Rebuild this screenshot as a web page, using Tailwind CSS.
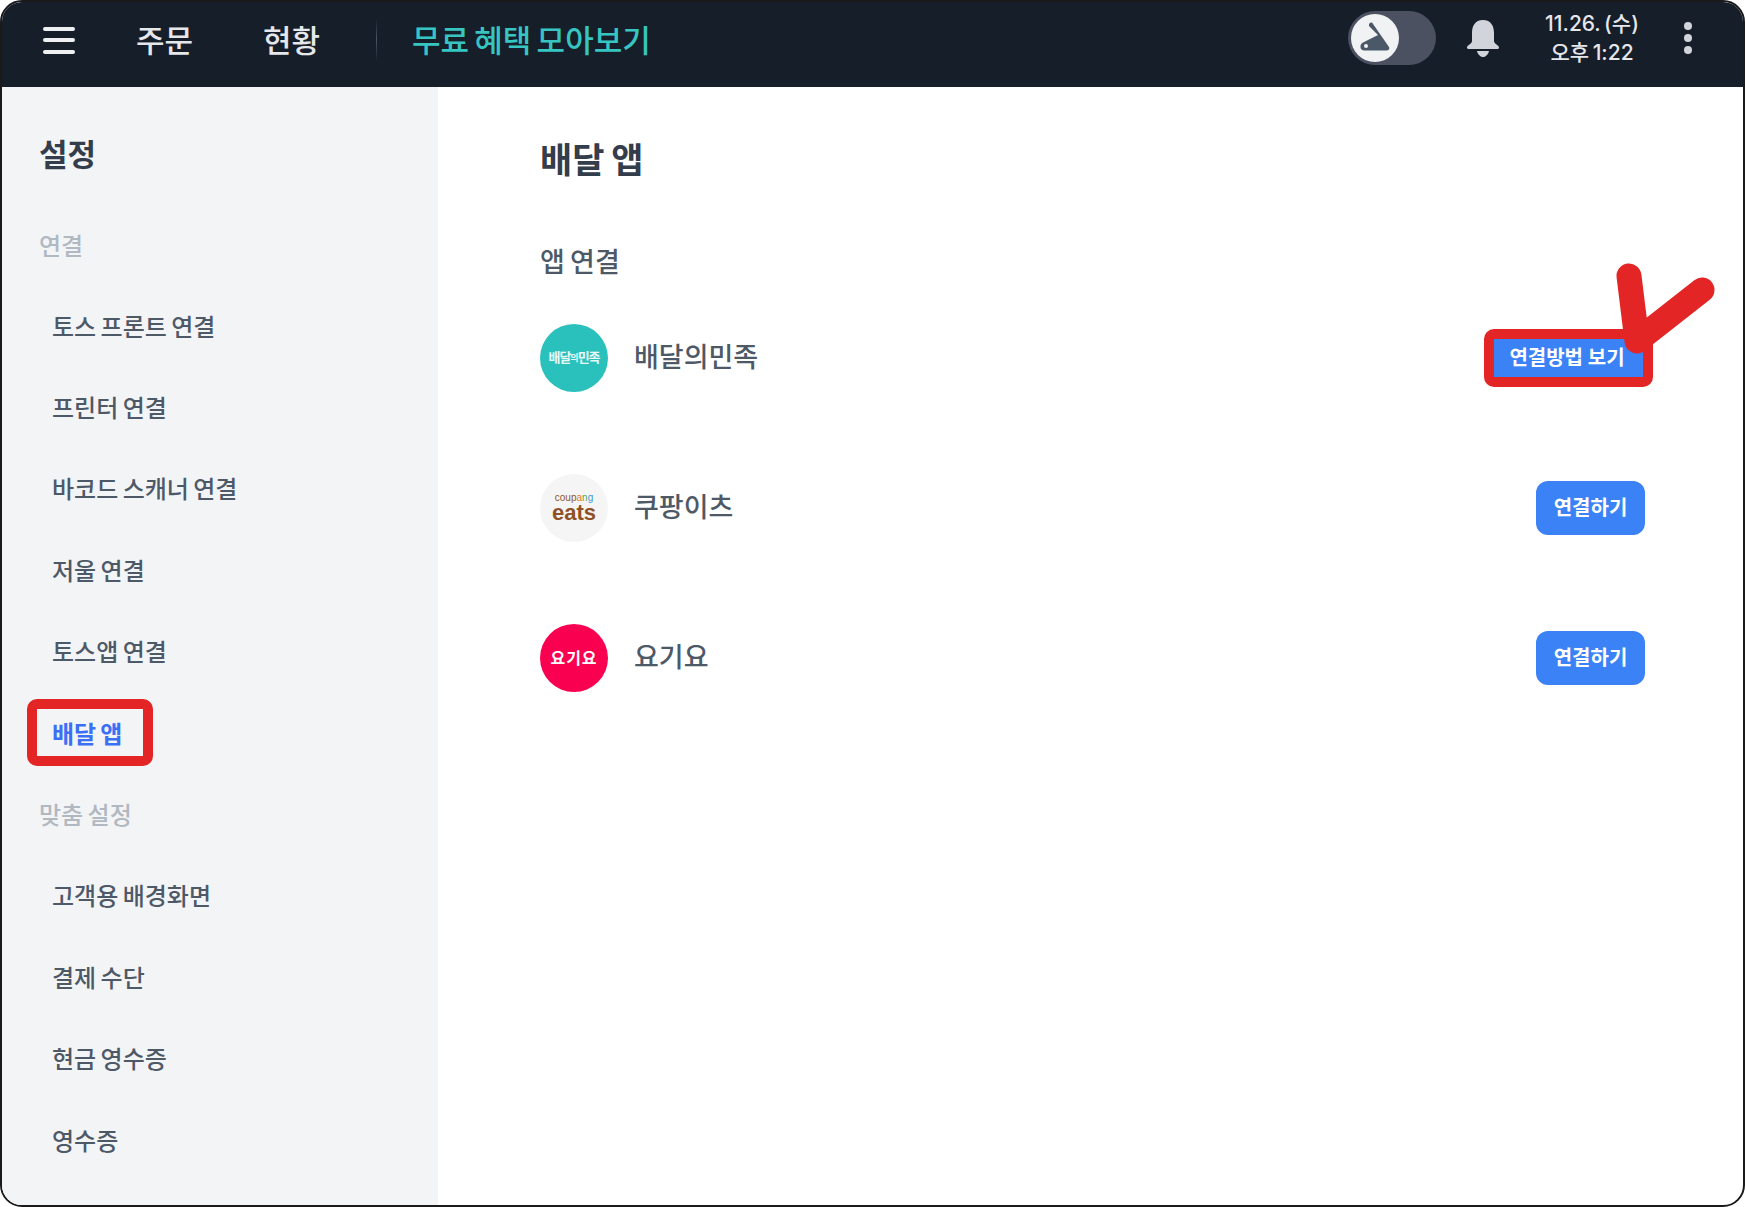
<!DOCTYPE html>
<html lang="ko">
<head>
<meta charset="utf-8">
<script src="https://cdn.jsdelivr.net/npm/@tailwindcss/browser@4"></script>
</head>
<body class="bg-white">
<div class="relative w-[1745px] h-[1207px] overflow-hidden">
  <div class="flex flex-col w-[1745px] h-[1207px] rounded-[22px] border-2 border-[#1a1a1a] overflow-hidden bg-white font-['Inter','Noto_Sans_CJK_KR',sans-serif] [word-spacing:-2px]">
    <header class="flex items-center h-[85px] shrink-0 bg-[#161e2a] text-[#e5e7eb] pb-[9px]">
      <svg class="ml-[41px] w-[32px] h-[28px] shrink-0" viewBox="0 0 32 28"><g stroke="#eef0f2" stroke-width="4" stroke-linecap="round"><path d="M2 3H30"/><path d="M2 14H30"/><path d="M2 26H30"/></g></svg>
      <span class="ml-[61px] w-[127px] text-[31px] font-medium leading-none">주문</span>
      <span class="text-[31px] font-medium leading-none w-[113px]">현황</span>
      <div class="w-px h-[44px] bg-gradient-to-b from-transparent via-[#4b5563] to-transparent"></div>
      <span class="ml-[35px] text-[31px] font-medium leading-none text-[#36c5c0] [word-spacing:-3px]">무료 혜택 모아보기</span>
      <div class="ml-auto flex items-center mb-[4px]">
        <div class="flex items-center w-[88px] h-[54px] rounded-full bg-[#4b5160] pl-[3px]">
          <svg class="w-[48px] h-[48px]" viewBox="0 0 48 48"><circle cx="24" cy="24" r="24" fill="#f1f2f4"/><path d="M18 10 Q19 8 21 8.5 L38 33 Q39 36 36 36.5 L13 36.5 Q9 36 9.5 31.5 Q10 29.5 12 28.5 L27 21 L18 12 Z" fill="#4b5868"/><circle cx="15" cy="32" r="2" fill="#f1f2f4"/></svg>
        </div>
        <svg class="ml-[30px] w-[34px] h-[38px]" viewBox="0 0 34 38"><path d="M17 1C9 1 6 7 6 14V22C6 25 1 26 1 28.5C1 29.5 2 30 3 30H31C32 30 33 29.5 33 28.5C33 26 28 25 28 22V14C28 7 25 1 17 1Z" fill="#d1d5db"/><path d="M11 32H23C22 36 19 38 17 38C15 38 12 36 11 32Z" fill="#d1d5db"/></svg>
        <div class="ml-[46px] w-[92px] flex flex-col items-center text-[21px] font-medium leading-[29px] text-[#e5e7eb] whitespace-nowrap">
          <span>11.26. (수)</span>
          <span>오후 1:22</span>
        </div>
        <div class="ml-[46px] mr-[51px] flex flex-col gap-[4px]">
          <span class="w-[8px] h-[8px] rounded-full bg-[#d1d5db]"></span>
          <span class="w-[8px] h-[8px] rounded-full bg-[#d1d5db]"></span>
          <span class="w-[8px] h-[8px] rounded-full bg-[#d1d5db]"></span>
        </div>
      </div>
    </header>
    <div class="flex flex-1 min-h-0">
      <aside class="w-[436px] shrink-0 bg-[#f3f4f6] pl-[37px] pt-[44px]">
        <h2 class="text-[31px] font-semibold leading-[48px] text-[#333d4b]">설정</h2>
        <p class="mt-[43px] h-[50px] flex items-center text-[24px] font-medium text-[#b0b8c1]">연결</p>
        <nav class="flex flex-col mt-[15px] pl-[13px] text-[24px] font-medium text-[#4e5968]">
          <a class="h-[81.4px] flex items-center">토스 프론트 연결</a>
          <a class="h-[81.4px] flex items-center">프린터 연결</a>
          <a class="h-[81.4px] flex items-center">바코드 스캐너 연결</a>
          <a class="h-[81.4px] flex items-center">저울 연결</a>
          <a class="h-[81.4px] flex items-center">토스앱 연결</a>
          <a class="h-[81.4px] flex items-center font-semibold text-[#3b6ff5]">배달 앱</a>
        </nav>
        <p class="h-[81.4px] flex items-center text-[24px] font-medium text-[#b0b8c1]">맞춤 설정</p>
        <nav class="flex flex-col pl-[13px] text-[24px] font-medium text-[#4e5968]">
          <a class="h-[81.4px] flex items-center">고객용 배경화면</a>
          <a class="h-[81.4px] flex items-center">결제 수단</a>
          <a class="h-[81.4px] flex items-center">현금 영수증</a>
          <a class="h-[81.4px] flex items-center">영수증</a>
        </nav>
      </aside>
      <main class="flex-1 pl-[102px] pr-[98px] pt-[47px]">
        <h1 class="text-[35px] font-semibold leading-[52px] text-[#333d4b]">배달 앱</h1>
        <h3 class="mt-[59px] text-[27px] font-medium leading-[36px] text-[#4e5968]">앱 연결</h3>
        <ul class="flex flex-col mt-[2px]">
          <li class="flex items-center h-[150px]">
            <div class="flex items-center justify-center w-[68px] h-[68px] rounded-full bg-[#2ac1bc] text-[13px] font-semibold text-white/90 whitespace-nowrap tracking-[-1px]">배달<span class="text-[9px]">의</span>민족</div>
            <span class="ml-[26px] text-[27px] font-medium text-[#4e5968]">배달의민족</span>
            <button class="ml-auto w-[156px] h-[54px] rounded-[12px] bg-[#3b82f6] text-[20px] font-bold text-white">연결방법 보기</button>
          </li>
          <li class="flex items-center h-[150px]">
            <div class="flex flex-col items-center justify-center w-[68px] h-[68px] rounded-full bg-[#f5f5f5] font-['Liberation_Sans',sans-serif]">
              <span class="text-[10px] leading-[10px] text-[#8a5a2b]">coup<span class="text-[#e8792b]">a</span><span class="text-[#5aa845]">n</span><span class="text-[#3a9ad9]">g</span></span>
              <span class="text-[22px] leading-[20px] font-bold text-[#8f5227]">eats</span>
            </div>
            <span class="ml-[26px] text-[27px] font-medium text-[#4e5968]">쿠팡이츠</span>
            <button class="ml-auto w-[109px] h-[54px] rounded-[12px] bg-[#3b82f6] text-[20px] font-bold text-white">연결하기</button>
          </li>
          <li class="flex items-center h-[150px]">
            <div class="flex items-center justify-center w-[68px] h-[68px] rounded-full bg-[#fa0050] text-[16px] font-bold text-white whitespace-nowrap tracking-[1px]">요기요</div>
            <span class="ml-[26px] text-[27px] font-medium text-[#4e5968]">요기요</span>
            <button class="ml-auto w-[109px] h-[54px] rounded-[12px] bg-[#3b82f6] text-[20px] font-bold text-white">연결하기</button>
          </li>
        </ul>
      </main>
    </div>
  </div>
  <div class="absolute left-[27px] top-[699px] w-[126px] h-[67px] rounded-[10px] border-[10px] border-[#e32526]"></div>
  <div class="absolute left-[1484px] top-[329px] w-[169px] h-[58px] rounded-[10px] border-[10px] border-[#e32526]"></div>
  <svg class="absolute left-[1600px] top-[250px] w-[130px] h-[110px]" viewBox="0 0 130 110"><path d="M29 26 L37 91 L102 40" fill="none" stroke="#e32526" stroke-width="25" stroke-linecap="round" stroke-linejoin="round"/></svg>
</div>
</body>
</html>
